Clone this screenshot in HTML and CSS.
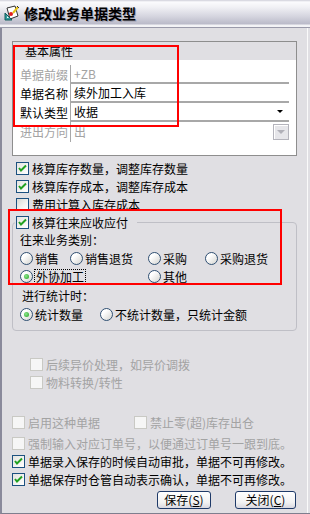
FILE: index.html
```html
<!DOCTYPE html>
<html lang="zh-CN">

<head>
    <meta charset="UTF-8">
    <meta name="viewport" content="width=device-width, initial-scale=1.0">
    <title>修改业务单据类型</title>
    <link rel="stylesheet" href="styles.css">
</head>

<body>
    <div class="window">
        <div class="titlebar">
            <svg class="app-icon" width="16" height="16" viewBox="0 0 16 16">
                <polygon points="3,3 11,1 14,11 6,14" fill="#fff" stroke="#333" stroke-width="1"/>
                <polygon points="1,8 1,15 8,15" fill="#2f9c9c" stroke="#125a5a" stroke-width="1"/>
                <polygon points="3,11 3,13 5,13" fill="#fff"/>
                <circle cx="7" cy="9" r="2" fill="#e11f1f"/>
                <line x1="9" y1="8" x2="14" y2="2" stroke="#e8c21a" stroke-width="2"/>
                <line x1="13" y1="1" x2="15" y2="3" stroke="#333" stroke-width="1"/>
            </svg>
            <span class="title">修改业务单据类型</span>
        </div>

        <div class="frame">
            <div class="client">
                <!-- 基本属性 -->
                <div class="panel">
                    <div class="panel-head">基本属性</div>
                    <div class="panel-body">
                        <div class="prop-row disabled">
                            <span class="prop-label">单据前缀</span>
                            <span class="field">+ZB</span>
                        </div>
                        <div class="prop-row">
                            <span class="prop-label">单据名称</span>
                            <span class="field">续外加工入库</span>
                        </div>
                        <div class="prop-row">
                            <span class="prop-label">默认类型</span>
                            <span class="field">收据<span class="arrow"></span></span>
                        </div>
                        <div class="prop-row last disabled">
                            <span class="prop-label">进出方向</span>
                            <span class="field plain">出<span class="drop-btn"><span class="drop-arrow"></span></span></span>
                        </div>
                    </div>
                </div>

                <div class="checks">
                    <div class="check"><span class="cb on"><svg width="11" height="11" viewBox="0 0 11 11"><polyline points="2,5 4,7.5 9,2.5" fill="none" stroke="#21a121" stroke-width="2"/></svg></span>核算库存数量，调整库存数量</div>
                    <div class="check"><span class="cb on"><svg width="11" height="11" viewBox="0 0 11 11"><polyline points="2,5 4,7.5 9,2.5" fill="none" stroke="#21a121" stroke-width="2"/></svg></span>核算库存成本，调整库存成本</div>
                    <div class="check"><span class="cb"></span>费用计算入库存成本</div>
                </div>

                <fieldset class="group">
                    <legend class="check legend"><span class="cb on"><svg width="11" height="11" viewBox="0 0 11 11"><polyline points="2,5 4,7.5 9,2.5" fill="none" stroke="#21a121" stroke-width="2"/></svg></span>核算往来应收应付</legend>
                    <div class="group-label">往来业务类别：</div>
                    <div class="radio-grid">
                        <span class="radio-item"><span class="rb"></span>销售</span>
                        <span class="radio-item"><span class="rb"></span>销售退货</span>
                        <span class="radio-item"><span class="rb"></span>采购</span>
                        <span class="radio-item"><span class="rb"></span>采购退货</span>
                        <span class="radio-item"><span class="rb on"></span><span class="focus">外协加工</span></span>
                        <span class="radio-item col3"><span class="rb"></span>其他</span>
                    </div>
                    <div class="group-label stat">进行统计时：</div>
                    <div class="radio-line">
                        <span class="radio-item w80"><span class="rb on"></span>统计数量</span>
                        <span class="radio-item"><span class="rb"></span>不统计数量，只统计金额</span>
                    </div>
                </fieldset>

                <div class="sub-options">
                    <div class="check disabled"><span class="cb off"></span>后续异价处理，如异价调拨</div>
                    <div class="check disabled"><span class="cb off"></span>物料转换/转性</div>
                </div>

                <div class="options">
                    <div class="check-line">
                        <div class="check disabled w122"><span class="cb off"></span>启用这种单据</div>
                        <div class="check disabled"><span class="cb off"></span>禁止零(超)库存出仓</div>
                    </div>
                    <div class="check disabled tall"><span class="cb off"></span>强制输入对应订单号，以便通过订单号一跟到底。</div>
                    <div class="check"><span class="cb on"><svg width="11" height="11" viewBox="0 0 11 11"><polyline points="2,5 4,7.5 9,2.5" fill="none" stroke="#21a121" stroke-width="2"/></svg></span>单据录入保存的时候自动审批，单据不可再修改。</div>
                    <div class="check"><span class="cb on"><svg width="11" height="11" viewBox="0 0 11 11"><polyline points="2,5 4,7.5 9,2.5" fill="none" stroke="#21a121" stroke-width="2"/></svg></span>单据保存时仓管自动表示确认，单据不可再修改。</div>
                </div>

                <div class="buttons">
                    <button class="btn save">保存(<u>S</u>)</button>
                    <button class="btn close">关闭(<u>C</u>)</button>
                </div>
            </div>
        </div>

        <!-- red annotation boxes drawn over the dialog -->
        <div class="mark mark-basic"></div>
        <div class="mark mark-ar"></div>
    </div>
</body>

</html>
```

FILE: styles.css
```css
* {
    box-sizing: border-box;
}

body {
    margin: 0;
    font-family: "Noto Sans CJK SC", "Noto Sans", sans-serif;
    font-size: 12px;
    color: #000;
}

.window {
    position: relative;
    width: 310px;
    height: 514px;
    display: flex;
    flex-direction: column;
    background: #e0dfe3;
    overflow: hidden;
}

/* Title bar */
.titlebar {
    flex: none;
    height: 28px;
    display: flex;
    align-items: center;
    padding: 0 0 2px 4px;
    background: linear-gradient(#cfcfd9 0, #fbfbfd 2px, #f1f1f5 7px, #d6d6e0 16px, #babac9 24px, #f3f3f6 25px, #f3f3f6 27px);
    border-bottom: 1px solid #9a9aaa;
}

.app-icon {
    margin-right: 4px;
}

.title {
    font-size: 14px;
    font-weight: bold;
    line-height: 18px;
    text-shadow: 1px 1px 0 #9c9cab;
}

.frame {
    flex: 1;
    display: flex;
    border-left: 2px solid #8a8a9b;
    border-bottom: 1px solid #7e7e8e;
    padding-right: 2px;
}

.client {
    flex: 1;
    border-right: 1px solid #fafafa;
    padding: 13px 10px 0 10px;
}

/* Basic properties panel */
.panel {
    border: 1px solid #8e8e8e;
}

.panel-head {
    height: 18px;
    line-height: 18px;
    padding-left: 12px;
}

.panel-body {
    height: 95px;
    background: #fff;
    padding: 5px 7px 0 7px;
}

.prop-row {
    display: flex;
    height: 19px;
    line-height: 19px;
}

.prop-row.last {
    height: 20px;
    line-height: 20px;
}

.prop-label {
    width: 50px;
    padding-left: 0;
}

.field {
    flex: 1;
    display: flex;
    align-items: center;
    justify-content: space-between;
    border-left: 1px solid #a8a8a8;
    border-bottom: 2px solid #a8a8a8;
    padding-left: 3px;
    padding-right: 4px;
}

.field.plain {
    border-bottom: none;
    padding-right: 0;
}

.arrow {
    width: 0;
    height: 0;
    border-left: 3px solid transparent;
    border-right: 3px solid transparent;
    border-top: 3px solid #000;
    margin-right: 2px;
}

.drop-btn {
    width: 16px;
    height: 16px;
    display: flex;
    align-items: center;
    justify-content: center;
    background: #e6e6ea;
    border: 1px solid #b4b4bc;
    box-shadow: inset 1px 1px 0 #fff;
}

.drop-arrow {
    width: 0;
    height: 0;
    border-left: 4px solid transparent;
    border-right: 4px solid transparent;
    border-top: 4px solid #b0b0b8;
}

.disabled {
    color: #a3a3a3;
}

/* Checkboxes */
.checks {
    margin-top: 3px;
    padding-left: 4px;
}

.check {
    display: flex;
    align-items: center;
    height: 18px;
    gap: 3px;
    white-space: nowrap;
}

.cb {
    flex: none;
    width: 13px;
    height: 13px;
    display: flex;
    align-items: center;
    justify-content: center;
    border: 1px solid #1c5180;
    background: linear-gradient(135deg, #d8d8d2, #f4f4f2 60%, #ffffff);
}

.cb.on {
    background: linear-gradient(135deg, #e4e4e0, #ffffff);
}

.cb.off {
    border-color: #c9c9c4;
    background: #f6f6f6;
}

/* Group box with checkbox caption */
.group {
    margin: 0;
    min-width: 0;
    padding: 0 0 7px 2px;
    border: 1px solid #bfbfc6;
    border-radius: 4px;
}

.legend {
    padding: 0 9px 0 1px;
    height: 18px;
}

.group-label {
    height: 18px;
    line-height: 18px;
    padding-left: 5px;
}

.group-label.stat {
    height: 20px;
    line-height: 21px;
    padding-left: 7px;
}

.radio-grid {
    display: grid;
    grid-template-columns: 50px 78px 57px auto;
    grid-auto-rows: 18px;
    padding-left: 5px;
}

.radio-grid .col3 {
    grid-column: 3;
}

.radio-line {
    display: flex;
    height: 18px;
    padding-left: 5px;
}

.radio-item {
    display: flex;
    align-items: center;
    gap: 2px;
    white-space: nowrap;
}

.radio-item.w80 {
    width: 80px;
}

.rb {
    flex: none;
    position: relative;
    width: 13px;
    height: 13px;
    border-radius: 50%;
    border: 1px solid #2f4f72;
    background: linear-gradient(135deg, #ffffff 30%, #d4d4d0);
}

.rb.on::after {
    content: "";
    position: absolute;
    left: 3px;
    top: 3px;
    width: 5px;
    height: 5px;
    border-radius: 50%;
    background: radial-gradient(circle at 40% 40%, #8ee88e, #21a121);
}

.focus {
    outline: 1px dotted #000;
    outline-offset: 0;
    padding: 0 1px;
    line-height: 13px;
}

/* Disabled follow-up options */
.sub-options {
    margin-top: 24px;
    padding-left: 18px;
}

.options {
    margin-top: 22px;
}

.check-line {
    display: flex;
}

.check.w122 {
    width: 122px;
}

.check.tall {
    height: 21px;
    padding-top: 3px;
}

/* Buttons */
.buttons {
    display: flex;
    justify-content: flex-end;
    gap: 24px;
    margin-top: 3px;
    padding-right: 1px;
}

.btn {
    height: 18px;
    padding: 0;
    font-family: "Noto Sans CJK SC", "Noto Sans", sans-serif;
    font-size: 12px;
    line-height: 16px;
    color: #000;
    border: 1px solid #1f3a68;
    border-radius: 3px;
    background: linear-gradient(#ffffff, #f2f2f2 65%, #d8d8e0);
}

.btn.save {
    width: 54px;
}

.btn.close {
    width: 61px;
}

/* Red annotation rectangles */
.mark {
    position: absolute;
    border: 2px solid #f00;
}

.mark-basic {
    left: 13px;
    top: 45px;
    width: 166px;
    height: 82px;
}

.mark-ar {
    left: 8px;
    top: 209px;
    width: 274px;
    height: 76px;
}
```
